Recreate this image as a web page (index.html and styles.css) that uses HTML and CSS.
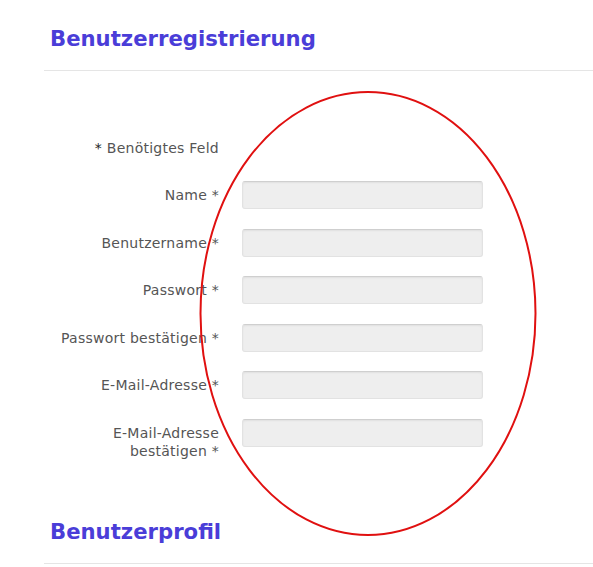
FILE: index.html
```html
<!DOCTYPE html>
<html lang="de">
<head>
  <meta charset="UTF-8" />
  <meta name="viewport" content="width=device-width, initial-scale=1.0" />
  <title>Benutzerregistrierung</title>
  <link rel="stylesheet" href="styles.css">
</head>
<body>
  <div class="page">
    <section class="block">
      <h2 class="block-title">Benutzerregistrierung</h2>
      <div class="form">
        <p class="note"><span class="star">*</span> Benötigtes Feld</p>
        <div class="row">
          <label for="name">Name *</label>
          <input type="text" id="name">
        </div>
        <div class="row">
          <label for="username">Benutzername *</label>
          <input type="text" id="username">
        </div>
        <div class="row">
          <label for="password">Passwort *</label>
          <input type="password" id="password">
        </div>
        <div class="row">
          <label for="password2">Passwort bestätigen *</label>
          <input type="password" id="password2">
        </div>
        <div class="row">
          <label for="email">E-Mail-Adresse *</label>
          <input type="text" id="email">
        </div>
        <div class="row">
          <label for="email2">E-Mail-Adresse<br>bestätigen *</label>
          <input type="text" id="email2">
        </div>
      </div>
    </section>
    <section class="block">
      <h2 class="block-title">Benutzerprofil</h2>
    </section>

    <!-- red marker drawn over the fields -->
    <svg class="marker" width="593" height="567" viewBox="0 0 593 567">
      <ellipse cx="368" cy="313.5" rx="167.5" ry="221.5" fill="none" stroke="#e01010" stroke-width="2" />
    </svg>
  </div>
</body>
</html>
```

FILE: styles.css
```css
body {
  margin: 0;
  padding: 0;
  background: #fff;
  font-family: "DejaVu Sans", Verdana, sans-serif;
  color: #555;
}
.page {
  position: relative;
  width: 593px;
  height: 567px;
  overflow: hidden;
}
.block-title {
  margin: 0 0 0 44px;
  padding: 25px 6px 17px;
  font-size: 21.2px;
  line-height: 28px;
  font-weight: bold;
  color: #4a3dd8;
  border-bottom: 1px solid #e5e5e5;
}
.form {
  padding: 68px 0 0 44px;
  margin-bottom: 33px;
}
.note {
  width: 175px;
  margin: 0 0 24px;
  text-align: right;
  font-size: 14px;
  line-height: 18px;
  letter-spacing: 0.25px;
}
.star {
  color: #222;
}
.row {
  display: flex;
  align-items: flex-start;
  gap: 23px;
  margin-bottom: 19.6px;
}
.row:last-child {
  margin-bottom: 0;
}
.row label {
  width: 175px;
  padding-top: 5px;
  text-align: right;
  font-size: 14px;
  line-height: 18px;
  letter-spacing: 0.25px;
}
.row input {
  box-sizing: border-box;
  width: 241px;
  height: 28px;
  margin: 0;
  background: #eee;
  border: 1px solid #e2e2e2;
  border-top-color: #cfcfcf;
  border-radius: 3px;
  box-shadow: inset 0 1px 2px rgba(0,0,0,0.06);
}
.marker {
  position: absolute;
  left: 0;
  top: 0;
  pointer-events: none;
}
```
